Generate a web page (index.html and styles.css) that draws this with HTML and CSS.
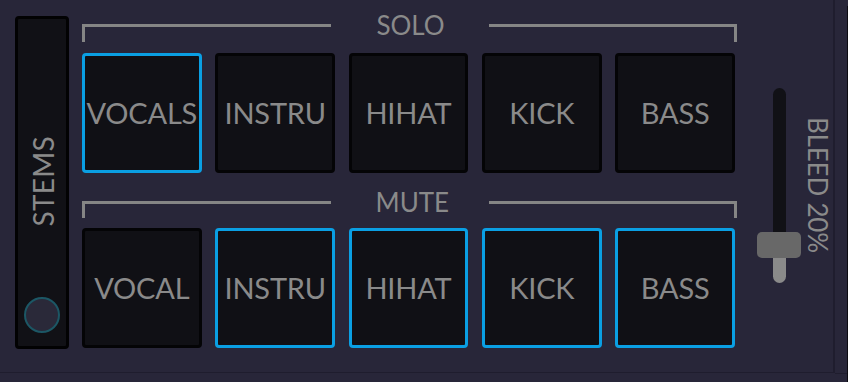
FILE: index.html
```html
<!DOCTYPE html>
<html>
<head>
<meta charset="utf-8">
<link rel="stylesheet" href="styles.css">
</head>
<body>
<div class="app">
  <div class="stems">
    <div class="stems-label">STEMS</div>
    <div class="stems-knob"></div>
  </div>
  <div class="center">
    <div class="group-head">
      <div class="seg seg-left"></div>
      <div class="group-label">SOLO</div>
      <div class="seg seg-right"></div>
    </div>
    <div class="pads">
      <div class="pad on">VOCALS</div>
      <div class="pad">INSTRU</div>
      <div class="pad">HIHAT</div>
      <div class="pad">KICK</div>
      <div class="pad">BASS</div>
    </div>
    <div class="group-head mute">
      <div class="seg seg-left"></div>
      <div class="group-label">MUTE</div>
      <div class="seg seg-right"></div>
    </div>
    <div class="pads">
      <div class="pad">VOCAL</div>
      <div class="pad on">INSTRU</div>
      <div class="pad on">HIHAT</div>
      <div class="pad on">KICK</div>
      <div class="pad on">BASS</div>
    </div>
  </div>
  <div class="slider">
    <div class="track-top"></div>
    <div class="thumb"></div>
    <div class="track-bottom"></div>
  </div>
  <div class="bleed">BLEED 20%</div>
</div>
<div class="gutter"></div>
<div class="edge"></div>
</body>
</html>
```
FILE: styles.css
```css
html, body {
  margin: 0;
  padding: 0;
}
body {
  width: 848px;
  height: 382px;
  overflow: hidden;
  background: #282639;
  display: flex;
  align-items: flex-start;
  font-family: Lato, "Open Sans", sans-serif;
  color: #8a8a8a;
}
.app {
  display: flex;
  align-items: flex-start;
  width: 835px;
  height: 373px;
  box-sizing: border-box;
  border-right: 2px solid #1f1d2e;
  border-bottom: 1px solid #1f1d2e;
  flex: none;
}
.gutter {
  width: 12px;
  height: 373px;
  flex: none;
  border-bottom: 1px solid #1f1d2e;
}
.edge {
  width: 1px;
  height: 376px;
  margin-top: 6px;
  background: #0c0b12;
  flex: none;
}
.stems {
  margin-top: 16px;
  margin-left: 15px;
  width: 54px;
  height: 333px;
  box-sizing: border-box;
  border: 3px solid #020203;
  border-radius: 4px;
  background: #111116;
  display: flex;
  flex-direction: column;
  align-items: center;
  flex: none;
}
.stems-label {
  margin-top: 117px;
  writing-mode: vertical-rl;
  transform: rotate(180deg);
  font-size: 28px;
  line-height: 1;
  letter-spacing: 0.3px;
  margin-left: 2px;
}
.stems-knob {
  margin-top: auto;
  margin-bottom: 13px;
  width: 36px;
  height: 36px;
  box-sizing: border-box;
  border-radius: 50%;
  border: 2px solid #1c5765;
  background: #2a2939;
}
.center {
  margin-top: 24px;
  margin-left: 13px;
  width: 655px;
  flex: none;
  display: flex;
  flex-direction: column;
}
.group-head {
  display: flex;
  align-items: flex-start;
  height: 18px;
}
.group-head.mute {
  margin-top: 28px;
  height: 17px;
}
.seg {
  flex: 1;
  height: 100%;
  box-sizing: border-box;
  border-top: 3px solid #858585;
}
.seg-left {
  border-left: 3px solid #858585;
}
.seg-right {
  border-right: 3px solid #858585;
}
.group-label {
  width: 70px;
  margin: -12px 43px 0 45px;
  text-align: center;
  font-size: 26px;
  line-height: 26px;
  white-space: nowrap;
}
.pads {
  display: flex;
  gap: 13.75px;
  margin-top: 11px;
  padding-right: 2px;
}
.mute + .pads {
  margin-top: 10px;
}
.pad {
  flex: 1;
  height: 120px;
  box-sizing: border-box;
  border: 3px solid #040406;
  border-radius: 4px;
  background: #101015;
  display: flex;
  align-items: center;
  justify-content: center;
  font-size: 29px;
  letter-spacing: -0.2px;
  white-space: nowrap;
  padding-bottom: 2px;
}
.pad.on {
  border-color: #0a9fe3;
}
.slider {
  margin-top: 88px;
  margin-left: 20px;
  width: 44px;
  display: flex;
  flex-direction: column;
  align-items: center;
  flex: none;
}
.track-top {
  width: 13px;
  height: 144px;
  background: #111116;
  border-radius: 6.5px 6.5px 0 0;
}
.thumb {
  width: 44px;
  height: 26px;
  background: #686868;
  border-radius: 5px;
}
.track-bottom {
  width: 13px;
  height: 25px;
  background: #8a8a8a;
  border-radius: 0 0 6.5px 6.5px;
}
.bleed {
  margin-top: 117px;
  margin-left: 4px;
  writing-mode: vertical-rl;
  font-size: 26px;
  line-height: 1;
  letter-spacing: -0.2px;
  white-space: nowrap;
}
```
